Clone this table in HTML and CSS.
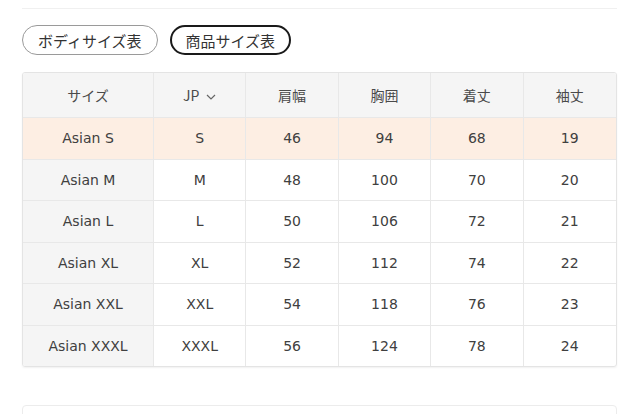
FILE: index.html
```html
<!DOCTYPE html>
<html lang="ja">
<head>
<meta charset="utf-8">
<link rel="stylesheet" href="styles.css">
</head>
<body>
<div class="wrap">
  <div class="topline"></div>
  <div class="tabs">
    <span class="pill">ボディサイズ表</span>
    <span class="pill active">商品サイズ表</span>
  </div>
  <table class="size">
    <thead>
      <tr>
        <th class="first">サイズ</th>
        <th>JP <svg class="chev" width="10" height="6" viewBox="0 0 10 6"><path d="M1 1l4 4 4-4" fill="none" stroke="#666" stroke-width="1.2"/></svg></th>
        <th>肩幅</th>
        <th>胸囲</th>
        <th>着丈</th>
        <th>袖丈</th>
      </tr>
    </thead>
    <tbody>
      <tr class="hl"><td class="first">Asian S</td><td>S</td><td>46</td><td>94</td><td>68</td><td>19</td></tr>
      <tr><td class="first">Asian M</td><td>M</td><td>48</td><td>100</td><td>70</td><td>20</td></tr>
      <tr><td class="first">Asian L</td><td>L</td><td>50</td><td>106</td><td>72</td><td>21</td></tr>
      <tr><td class="first">Asian XL</td><td>XL</td><td>52</td><td>112</td><td>74</td><td>22</td></tr>
      <tr><td class="first">Asian XXL</td><td>XXL</td><td>54</td><td>118</td><td>76</td><td>23</td></tr>
      <tr><td class="first">Asian XXXL</td><td>XXXL</td><td>56</td><td>124</td><td>78</td><td>24</td></tr>
    </tbody>
  </table>
  <div class="nextbox"></div>
</div>
</body>
</html>
```
FILE: styles.css
```css
html, body {
  margin: 0;
  padding: 0;
  background: #fff;
}
body {
  font-family: "DejaVu Sans", "Noto Sans CJK JP", sans-serif;
  color: #3a3a3a;
  font-size: 14px;
}
.wrap {
  width: 595px;
  padding-left: 22px;
  padding-top: 8px;
}
.topline {
  height: 1px;
  background: #f0f0f0;
}
.tabs {
  display: flex;
  gap: 12px;
  margin-top: 16px;
}
.pill {
  display: inline-flex;
  align-items: center;
  justify-content: center;
  height: 30px;
  box-sizing: border-box;
  padding: 0 15px;
  border: 1px solid #9a9a9a;
  border-radius: 15px;
  font-family: "Noto Sans CJK JP", sans-serif;
  font-size: 15px;
  color: #333;
  line-height: 1;
}
.pill.active {
  border: 2px solid #1a1a1a;
  padding: 0 14px;
}
.size {
  margin-top: 17px;
  width: 595px;
  border-collapse: separate;
  border-spacing: 0;
  border: 1px solid #e4e4e4;
  border-radius: 3px;
  box-shadow: 0 1px 2px rgba(0,0,0,0.06);
  overflow: hidden;
  table-layout: fixed;
}
.size th, .size td {
  text-align: center;
  font-weight: normal;
  font-size: 14px;
  color: #404040;
  border-right: 1px solid #e8e8e8;
  border-bottom: 1px solid #e8e8e8;
  padding: 0;
}
.size th {
  font-family: "Noto Sans CJK JP", sans-serif;
  font-size: 14px;
  color: #4a4a4a;
  height: 44px;
  background: #f5f5f5;
}
.size th:last-child, .size td:last-child {
  border-right: none;
}
.size tbody tr:last-child td {
  border-bottom: none;
}
.size td {
  height: 40.5px;
}
.size .first {
  width: 130px;
  background: #f5f5f5;
}
.size tr.hl td {
  background: #fdeee3;
}
.chev {
  margin-left: 4px;
  vertical-align: middle;
}
.nextbox {
  margin-top: 38px;
  height: 30px;
  border: 1px solid #ececec;
  border-radius: 4px;
}
```
